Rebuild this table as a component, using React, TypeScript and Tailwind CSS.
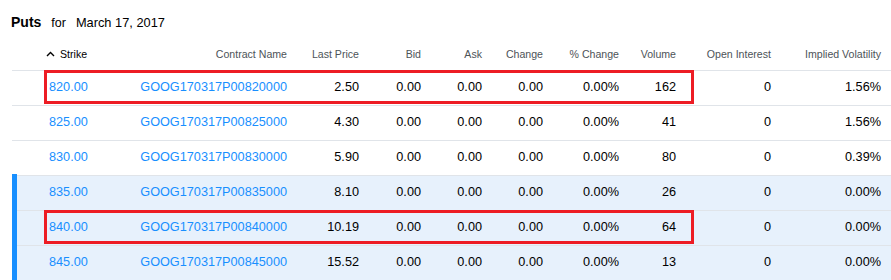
import React from "react";

type Row = {
  strike: string;
  name: string;
  last: string;
  volume: string;
  iv: string;
  itm: boolean;
  marked: boolean;
};

const rows: Row[] = [
  { strike: "820.00", name: "GOOG170317P00820000", last: "2.50", volume: "162", iv: "1.56%", itm: false, marked: true },
  { strike: "825.00", name: "GOOG170317P00825000", last: "4.30", volume: "41", iv: "1.56%", itm: false, marked: false },
  { strike: "830.00", name: "GOOG170317P00830000", last: "5.90", volume: "80", iv: "0.39%", itm: false, marked: false },
  { strike: "835.00", name: "GOOG170317P00835000", last: "8.10", volume: "26", iv: "0.00%", itm: true, marked: false },
  { strike: "840.00", name: "GOOG170317P00840000", last: "10.19", volume: "64", iv: "0.00%", itm: true, marked: true },
  { strike: "845.00", name: "GOOG170317P00845000", last: "15.52", volume: "13", iv: "0.00%", itm: true, marked: false },
];

// column widths after the strike column, right aligned
const cols = [
  "w-[187px]",
  "w-[72px]",
  "w-[62px]",
  "w-[61px]",
  "w-[61px]",
  "w-[76px]",
  "w-[57px]",
  "w-[95px]",
  "w-[110px]",
];

const headers = [
  "Contract Name",
  "Last Price",
  "Bid",
  "Ask",
  "Change",
  "% Change",
  "Volume",
  "Open Interest",
  "Implied Volatility",
];

export default function App() {
  return (
    <div
      className="w-[891px] h-[280px] overflow-hidden bg-white text-black"
      style={{ fontFamily: "Arial, 'Liberation Sans', sans-serif" }}
    >
      {/* Title */}
      <div className="flex items-baseline h-[20px] mt-[12px] pl-[11px] leading-[20px]">
        <span className="text-[14px] font-bold">Puts</span>
        <span className="text-[12.5px] ml-[10px]">for</span>
        <span className="text-[12.8px] ml-[10px]">March 17, 2017</span>
      </div>

      {/* Table */}
      <div className="ml-[12px] mt-[6px]">
        <div className="flex items-center h-[33px] pt-[1px] border-b border-[#e0e4e9] text-[10.6px] text-[#4d5358]">
          <div className="w-[88px] flex items-center pl-[34px] gap-[5px] text-black">
            <svg width="9" height="6" viewBox="0 0 9 6" className="mb-[1px]">
              <polyline points="1,5 4.5,1.5 8,5" fill="none" stroke="#000" strokeWidth="1.4" />
            </svg>
            <span>Strike</span>
          </div>
          {headers.map((h, i) => (
            <div key={h} className={`${cols[i]} text-right`}>
              {h}
            </div>
          ))}
        </div>

        {rows.map((r) => {
          const vals = [r.name, r.last, "0.00", "0.00", "0.00", "0.00%", r.volume, "0", r.iv];
          return (
            <div
              key={r.strike}
              className={`relative flex items-center h-[35px] border-b border-[#e0e4e9] text-[12.7px] ${
                r.itm ? "bg-[#e7f1fc]" : "bg-white"
              }`}
            >
              {r.itm && <div className="absolute left-0 top-[-2px] bottom-0 w-[5px] bg-[#188fff]" />}
              <div className="w-[88px] pl-[37px] text-[#188fff]">{r.strike}</div>
              {vals.map((v, i) => (
                <div
                  key={i}
                  className={`${cols[i]} text-right ${i === 0 ? "text-[#188fff]" : ""}`}
                >
                  {v}
                </div>
              ))}
              {r.marked && (
                <div className="absolute left-[32px] top-[-1px] w-[650px] h-[34px] border-[3px] border-[#ed1c24]" />
              )}
            </div>
          );
        })}
      </div>
    </div>
  );
}
